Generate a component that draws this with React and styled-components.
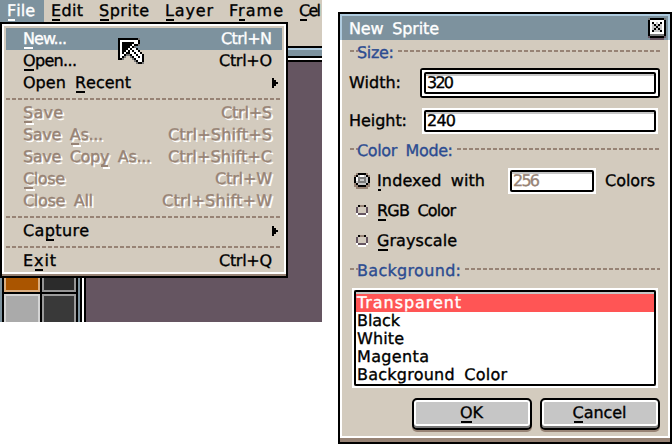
import React, { useLayoutEffect, useRef } from "react";
import styled, { createGlobalStyle, css } from "styled-components";

const c = {
  face: "#d3cbbe",
  slate: "#7d929e",
  sky: "#aecbdf",
  brown: "#978375",
  plum: "#655561",
  navy: "#2c4c91",
  red: "#ff5555",
  silver: "#c6c6c6",
};

const GlobalStyle = createGlobalStyle`
  * { box-sizing: border-box; }
  body { margin: 0; background: #fff; overflow: hidden; }
`;

/* ---------- text ---------- */

const TextBox = styled.span`
  display: block;
  flex: none;
  width: ${(p) => p.$w}px;
  height: 18px;
  line-height: 18px;
  font-family: "DejaVu Sans", sans-serif;
  font-size: 16px;
  word-spacing: 4px;
  white-space: pre;
  text-rendering: geometricPrecision;
  -webkit-text-stroke: 0.35px currentColor;
  color: ${(p) => p.$color || "#000"};
  ${(p) =>
    p.$disabled &&
    css`
      color: ${c.brown};
      text-shadow: 2px 2px 0 #fff;
    `}
`;

const Run = styled.span`
  display: inline-block;
  margin-left: -1px;
`;

const Mnemonic = styled.span`
  position: relative;
  &::after {
    content: "";
    position: absolute;
    left: 1px;
    right: 1px;
    bottom: -1px;
    height: 2px;
    background: currentColor;
    box-shadow: ${(p) => (p.$disabled ? "2px 2px 0 #fff" : "none")};
  }
`;

/* Text whose tracking is set so that it spans `w` pixels. "_" marks the mnemonic. */
function Text({ children, w, color, disabled }) {
  const ref = useRef(null);
  const at = children.indexOf("_");
  const plain = children.replace("_", "");
  useLayoutEffect(() => {
    const el = ref.current;
    el.style.letterSpacing = "0px";
    const natural = el.getBoundingClientRect().width;
    el.style.letterSpacing = `${(w + 1 - natural) / (plain.length - 1)}px`;
  }, [w, plain]);
  return (
    <TextBox $w={w} $color={color} $disabled={disabled}>
      <Run ref={ref}>
        {at < 0 ? (
          plain
        ) : (
          <>
            {plain.slice(0, at)}
            <Mnemonic $disabled={disabled}>{plain[at]}</Mnemonic>
            {plain.slice(at + 1)}
          </>
        )}
      </Run>
    </TextBox>
  );
}

/* ---------- pixel drawings ---------- */

const Svg = styled.svg`
  display: block;
  flex: none;
`;

function Pixels({ rows, palette }) {
  const width = Math.max(...rows.map((r) => r.length));
  return (
    <Svg width={width * 2} height={rows.length * 2} viewBox={`0 0 ${width} ${rows.length}`} shapeRendering="crispEdges">
      {rows.flatMap((row, y) =>
        [...row].map((k, x) =>
          palette[k] ? <rect key={`${x}-${y}`} x={x} y={y} width="1" height="1" fill={palette[k]} /> : null
        )
      )}
    </Svg>
  );
}

const palette = { B: "#000", W: "#fff", G: "#777", S: c.silver, D: "#7b7b7b", R: c.brown, P: c.plum };

const cursorRows = [
  "BBBBBBBBBBG",
  "BWWWWWWWWWB",
  "BWBBBBBBWWB",
  "BWBBBBBWBBG",
  "BWBBBBWBG",
  "BWBBBWBWWB",
  "BWBBWBWBWWB",
  "BWBWBBWWBWWB",
  "BWWBGGBWWBWWB",
  "BWBG  GBWWBWB",
  "BBG    GBWWWB",
  "        GBWWB",
  "         GBBG",
];
const arrowRows = ["B", "BB", "BBB", "BB", "B"];
const closeRows = [
  "GBBBBBBBG",
  "BWWWWWWWB",
  "BWBWSWBWB",
  "BWSBSBSWB",
  "BWSSBSSWB",
  "BWSBSBSWB",
  "BWBSSSBWB",
  "BWWWWWWWB",
  "BDDDDDDDB",
  "PBBBBBBBP",
  " PPPPPPP ",
];
const radioOnRows = [
  " RBBBBR ",
  "RBSWWSBR",
  "BWDDDDSB",
  "BWDSSDSB",
  "BSDDDDSB",
  "RBSSSSBR",
  "RRBBBBRR",
  " RRRRRR ",
];
const radioOffRows = [" BRRB ", "P    P", "P    P", "P    P", "WPPPPW", " WWWW "];

/* ---------- editor window ---------- */

const Page = styled.main`
  display: flex;
  gap: 16px;
  width: 672px;
  height: 444px;
  overflow: hidden;
`;

const Editor = styled.section`
  position: relative;
  flex: none;
  display: flex;
  flex-direction: column;
  width: 322px;
  height: 322px;
  overflow: hidden;
  background: ${c.plum};
`;

const MenuBar = styled.nav`
  display: flex;
  flex: none;
  height: 46px;
  background: ${c.face};
`;

const MenuTitle = styled.div`
  display: flex;
  flex: none;
  align-items: center;
  height: 22px;
  padding: 0 ${(p) => (p.$last ? 0 : 9)}px 0 8px;
  background: ${(p) => (p.$active ? c.slate : "transparent")};
`;

const TabEdge = styled.div`
  flex: none;
  height: 16px;
  border-top: 2px solid #000;
  background: linear-gradient(${c.sky} 2px, ${c.slate} 2px 8px, #000 8px 10px, #fff 10px 12px, #000 12px);
`;

const Workspace = styled.div`
  display: flex;
  flex: 1;
`;

const Palette = styled.div`
  display: grid;
  grid-template-columns: 36px 34px;
  grid-template-rows: 230px 36px;
  gap: 2px;
  width: 78px;
  padding: 0 2px;
  border-left: 2px solid ${c.slate};
  background: #000;
`;

const Swatch = styled.div`
  background: ${(p) => p.$fill};
  border: 2px solid ${(p) => p.$edge};
`;

const Rail = styled.div`
  width: 8px;
  background: linear-gradient(90deg, ${c.slate} 2px, #000 2px 4px, #fff 4px 6px, #000 6px);
`;

const Menu = styled.div`
  position: absolute;
  left: 0;
  top: 22px;
  width: 288px;
  height: 256px;
  border: 2px solid #000;
  background: ${c.brown};
`;

const MenuFace = styled.div`
  height: 250px;
  padding: 2px 2px 0;
  border: 2px solid #fff;
  background: ${c.face};
`;

const MenuItem = styled.div`
  display: flex;
  align-items: center;
  justify-content: space-between;
  height: 22px;
  padding: 0 ${(p) => (p.$sub ? 4 : 10)}px 0 18px;
  background: ${(p) => (p.$active ? c.slate : "transparent")};
`;

const dashes = css`
  height: 2px;
  background: repeating-linear-gradient(90deg, ${c.brown} 0 4px, transparent 4px 6px);
`;

const MenuRule = styled.div`
  ${dashes}
  width: 274px;
  margin: 4px 0 2px;
`;

const Pointer = styled.div`
  position: absolute;
  left: 118px;
  top: 38px;
`;

/* ---------- dialog ---------- */

const Dialog = styled.section`
  flex: none;
  width: 334px;
  height: 432px;
  margin-top: 12px;
  border: 2px solid #000;
  background: ${c.brown};
`;

const TitleBar = styled.header`
  display: flex;
  align-items: flex-start;
  justify-content: space-between;
  height: 26px;
  padding: 4px 2px 0 8px;
  border: 2px solid ${c.sky};
  border-bottom: 0;
  background: ${c.slate};
`;

const CloseButton = styled.div`
  margin-top: -2px;
`;

const Body = styled.div`
  height: 398px;
  padding-top: 2px;
  border: 2px solid #fff;
  border-top: 0;
  background: ${c.face};
`;

const Separator = styled.div`
  display: flex;
  align-items: center;
  height: 18px;
  margin: ${(p) => p.$top || 0}px 8px 0;
  & > span { margin-top: 4px; }
`;

const Dash = styled.div`
  ${dashes}
  flex: ${(p) => (p.$short ? "none" : 1)};
  width: ${(p) => (p.$short ? "8px" : "auto")};
  margin-left: ${(p) => p.$gap || 0}px;
`;

const Field = styled.div`
  display: flex;
  align-items: center;
  justify-content: space-between;
  height: ${(p) => p.$h}px;
  padding: 0 ${(p) => (p.$focus ? 8 : 10)}px 0 8px;
`;

const FocusRing = styled.div`
  border: 2px solid #000;
  border-radius: 3px;
`;

const Entry = styled.div`
  width: ${(p) => p.$w}px;
  height: 26px;
  border: 2px solid #fff;
  background: #fff;
`;

const EntryInner = styled.div`
  display: flex;
  align-items: center;
  height: 22px;
  padding-left: 2px;
  border: 2px solid #000;
  border-radius: 2px;
  background: linear-gradient(${c.silver} 2px, #fff 2px);
`;

const Option = styled.div`
  display: flex;
  align-items: center;
  height: 30px;
  margin-top: ${(p) => p.$top || 0}px;
  padding-left: 12px;
`;

const RadioCell = styled.div`
  display: flex;
  justify-content: center;
  width: 16px;
  margin-right: 8px;
`;

const Inline = styled.div`
  display: flex;
  align-items: center;
  gap: 10px;
  margin-left: 23px;
`;

const List = styled.div`
  width: 306px;
  height: 100px;
  margin: 10px 0 10px 10px;
  border: 2px solid #fff;
`;

const ListInner = styled.div`
  height: 96px;
  padding-top: 2px;
  border: 2px solid #000;
  border-radius: 2px;
  background: linear-gradient(${c.silver} 2px, #fff 2px);
`;

const ListItem = styled.div`
  display: flex;
  align-items: center;
  height: 18px;
  padding-left: 2px;
  background: ${(p) => (p.$active ? c.red : "transparent")};
`;

const Buttons = styled.div`
  display: flex;
  justify-content: flex-end;
  gap: 8px;
  padding-right: 8px;
`;

const Button = styled.div`
  display: flex;
  align-items: center;
  justify-content: center;
  width: 120px;
  height: 32px;
  padding-bottom: 2px;
  border: 2px solid #000;
  border-radius: 5px;
  background: ${c.silver};
  box-shadow: inset 0 -2px 0 #7b7b7b, inset 0 -4px 0 #fff, inset 0 0 0 2px #fff, 0 2px 0 ${c.brown};
`;

/* ---------- data ---------- */

const titles = [
  ["_File", 27],
  ["_Edit", 31],
  ["_Sprite", 49],
  ["_Layer", 47],
  ["F_rame", 53],
  ["_Cel", 21],
];

const items = [
  { label: "_New...", w: 43, keys: "Ctrl+N", kw: 50, active: true },
  { label: "_Open...", w: 53, keys: "Ctrl+O", kw: 52 },
  { label: "Open _Recent", w: 107, sub: true },
  { rule: true },
  { label: "_Save", w: 39, keys: "Ctrl+S", kw: 50, disabled: true },
  { label: "Save _As...", w: 79, keys: "Ctrl+Shift+S", kw: 103, disabled: true },
  { label: "Save Cop_y As...", w: 127, keys: "Ctrl+Shift+C", kw: 103, disabled: true },
  { label: "_Close", w: 41, keys: "Ctrl+W", kw: 56, disabled: true },
  { label: "Close All", w: 69, keys: "Ctrl+Shift+W", kw: 109, disabled: true },
  { rule: true },
  { label: "Ca_pture", w: 65, sub: true },
  { rule: true },
  { label: "E_xit", w: 32, keys: "Ctrl+Q", kw: 52 },
];

const backgrounds = [
  ["Transparent", 103],
  ["Black", 42],
  ["White", 46],
  ["Magenta", 71],
  ["Background Color", 149],
];

function Heading({ children, w, top }) {
  return (
    <Separator $top={top}>
      <Dash $short />
      <Text w={w} color={c.navy}>{children}</Text>
      <Dash $gap={4} />
    </Separator>
  );
}

export default function App() {
  return (
    <Page>
      <GlobalStyle />
      <Editor>
        <MenuBar>
          {titles.map(([label, w], i) => (
            <MenuTitle key={label} $active={i === 0} $last={i === titles.length - 1}>
              <Text w={w} color={i === 0 ? "#fff" : "#000"}>{label}</Text>
            </MenuTitle>
          ))}
        </MenuBar>
        <TabEdge />
        <Workspace>
          <Palette>
            <Swatch $fill="#aa5500" $edge="#d9ad80" />
            <Swatch $fill="#2b2b2b" $edge="#959595" />
            <Swatch $fill="#aaaaaa" $edge="#d4d4d4" />
            <Swatch $fill="#393939" $edge="#9b9b9b" />
          </Palette>
          <Rail />
        </Workspace>
        <Menu>
          <MenuFace>
            {items.map((it, i) =>
              it.rule ? (
                <MenuRule key={i} />
              ) : (
                <MenuItem key={i} $active={it.active} $sub={it.sub}>
                  <Text w={it.w} color={it.active ? "#fff" : "#000"} disabled={it.disabled}>{it.label}</Text>
                  {it.sub ? (
                    <Pixels rows={arrowRows} palette={palette} />
                  ) : (
                    <Text w={it.kw} color={it.active ? "#fff" : "#000"} disabled={it.disabled}>{it.keys}</Text>
                  )}
                </MenuItem>
              )
            )}
          </MenuFace>
        </Menu>
        <Pointer>
          <Pixels rows={cursorRows} palette={palette} />
        </Pointer>
      </Editor>

      <Dialog>
        <TitleBar>
          <Text w={89} color="#fff">New Sprite</Text>
          <CloseButton>
            <Pixels rows={closeRows} palette={palette} />
          </CloseButton>
        </TitleBar>
        <Body>
          <Heading w={36}>Size:</Heading>
          <Field $h={46} $focus>
            <Text w={51}>Width:</Text>
            <FocusRing>
              <Entry $w={236}>
                <EntryInner><Text w={26}>320</Text></EntryInner>
              </Entry>
            </FocusRing>
          </Field>
          <Field $h={30}>
            <Text w={57}>Height:</Text>
            <Entry $w={236}>
              <EntryInner><Text w={28}>240</Text></EntryInner>
            </Entry>
          </Field>
          <Heading w={95} top={4}>Color Mode:</Heading>
          <Option $top={8}>
            <RadioCell><Pixels rows={radioOnRows} palette={palette} /></RadioCell>
            <Text w={107}>_Indexed with</Text>
            <Inline>
              <Entry $w={88}>
                <EntryInner><Text w={26} color={c.brown}>256</Text></EntryInner>
              </Entry>
              <Text w={49}>Colors</Text>
            </Inline>
          </Option>
          <Option>
            <RadioCell><Pixels rows={radioOffRows} palette={palette} /></RadioCell>
            <Text w={78}>_RGB Color</Text>
          </Option>
          <Option>
            <RadioCell><Pixels rows={radioOffRows} palette={palette} /></RadioCell>
            <Text w={79}>_Grayscale</Text>
          </Option>
          <Heading w={103} top={4}>Background:</Heading>
          <List>
            <ListInner>
              {backgrounds.map(([label, w], i) => (
                <ListItem key={label} $active={i === 0}>
                  <Text w={w} color={i === 0 ? "#fff" : "#000"}>{label}</Text>
                </ListItem>
              ))}
            </ListInner>
          </List>
          <Buttons>
            <Button><Text w={22}>_OK</Text></Button>
            <Button><Text w={53}>_Cancel</Text></Button>
          </Buttons>
        </Body>
      </Dialog>
    </Page>
  );
}
